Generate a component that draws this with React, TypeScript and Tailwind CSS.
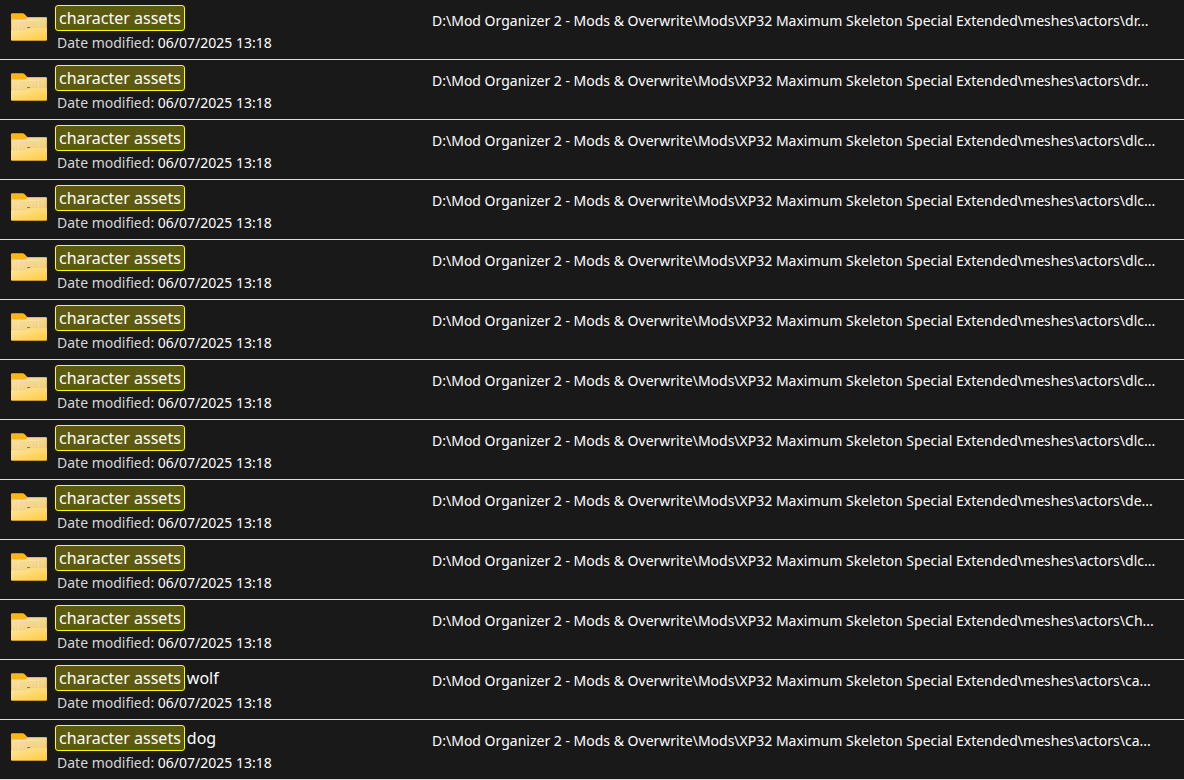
interface FileEntry {
  id: number;
  match: string;
  rest?: string;
  modified: string;
  folder: string;
}

const BASE_PATH = 'D:\\Mod Organizer 2 - Mods & Overwrite\\Mods\\XP32 Maximum Skeleton Special Extended\\meshes\\actors\\';

const folders = ['dr...', 'dr...', 'dlc...', 'dlc...', 'dlc...', 'dlc...', 'dlc...', 'dlc...', 'de...', 'dlc...', 'Ch...', 'ca...', 'ca...'];

const suffixes: Record<number, string> = { 11: 'wolf', 12: 'dog' };

const entries: FileEntry[] = folders.map((folder, id) => ({
  id,
  match: 'character assets',
  rest: suffixes[id],
  modified: '06/07/2025 13:18',
  folder,
}));

function FolderIcon() {
  return (
    <svg viewBox="0 0 36 28" className="h-7 w-9 shrink-0" aria-hidden="true">
      <defs>
        <linearGradient id="folder-back" x1="0" y1="0" x2="0" y2="1">
          <stop offset="0" stopColor="#fdb916" />
          <stop offset="1" stopColor="#e9a51c" />
        </linearGradient>
        <linearGradient id="folder-paper" x1="0" y1="0" x2="1" y2="1">
          <stop offset="0" stopColor="#fae3a4" />
          <stop offset="1" stopColor="#eecb78" />
        </linearGradient>
        <linearGradient id="folder-front" x1="0" y1="0" x2="1" y2="1">
          <stop offset="0" stopColor="#ffe7a3" />
          <stop offset="1" stopColor="#fecb3e" />
        </linearGradient>
      </defs>
      <path d="M0 1.5Q0 .3 1.2.3H11.6Q12.6.3 13.4 1.1L16.3 4H34.7Q36 4 36 5.3V26.5Q36 27.8 34.7 27.8H1.3Q0 27.8 0 26.5Z" fill="url(#folder-back)" />
      <path d="M.6 6.4H13.2Q14.4 6.4 15.3 5.7L16.3 5H35.4V18H.6Z" fill="url(#folder-paper)" />
      <path d="M7.5 16.5V7.5H27.5V14.5" fill="none" stroke="#fdf0c8" strokeWidth=".7" opacity=".5" />
      <path d="M0 17.4H14.2L17.2 15.2H36V26.3Q36 27.4 34.8 27.4H1.2Q0 27.4 0 26.3Z" fill="url(#folder-front)" />
      <path d="M16.2 14.6H19" fill="none" stroke="#6b5d35" strokeWidth=".9" />
      <path d="M.6 27.6H35.4" stroke="#b98b2a" strokeWidth=".6" />
    </svg>
  );
}

function FileRow({ entry }: { entry: FileEntry }) {
  return (
    <li className="flex h-15 border-b border-[#dedede] pr-4 pl-[11px]">
      <div className="flex w-[421px] shrink-0 gap-2">
        <div className="pt-[13px]">
          <FolderIcon />
        </div>
        <div className="min-w-0 pt-[5px]">
          {/* Name with the search match highlighted */}
          <div className="flex gap-[2px] text-[16px] leading-6 whitespace-nowrap">
            <mark className="rounded-[3px] border border-[#ffff00] bg-[#5c5a10] px-[3px] text-white">{entry.match}</mark>
            {entry.rest && <span className="py-px">{entry.rest}</span>}
          </div>
          <p className="pt-[2px] pl-[2px] text-[14px] leading-5 whitespace-nowrap">
            <span className="text-[#d6d6d6]">Date modified:</span> {entry.modified}
          </p>
        </div>
      </div>
      <p className="min-w-0 flex-1 truncate pt-[11px] text-[14px] leading-5">
        {BASE_PATH}
        {entry.folder}
      </p>
    </li>
  );
}

export default function App() {
  return (
    <main className="min-h-screen bg-[#191919] font-['Noto_Sans','Open_Sans',sans-serif] text-white">
      <ul>
        {entries.map((entry) => (
          <FileRow key={entry.id} entry={entry} />
        ))}
      </ul>
    </main>
  );
}
